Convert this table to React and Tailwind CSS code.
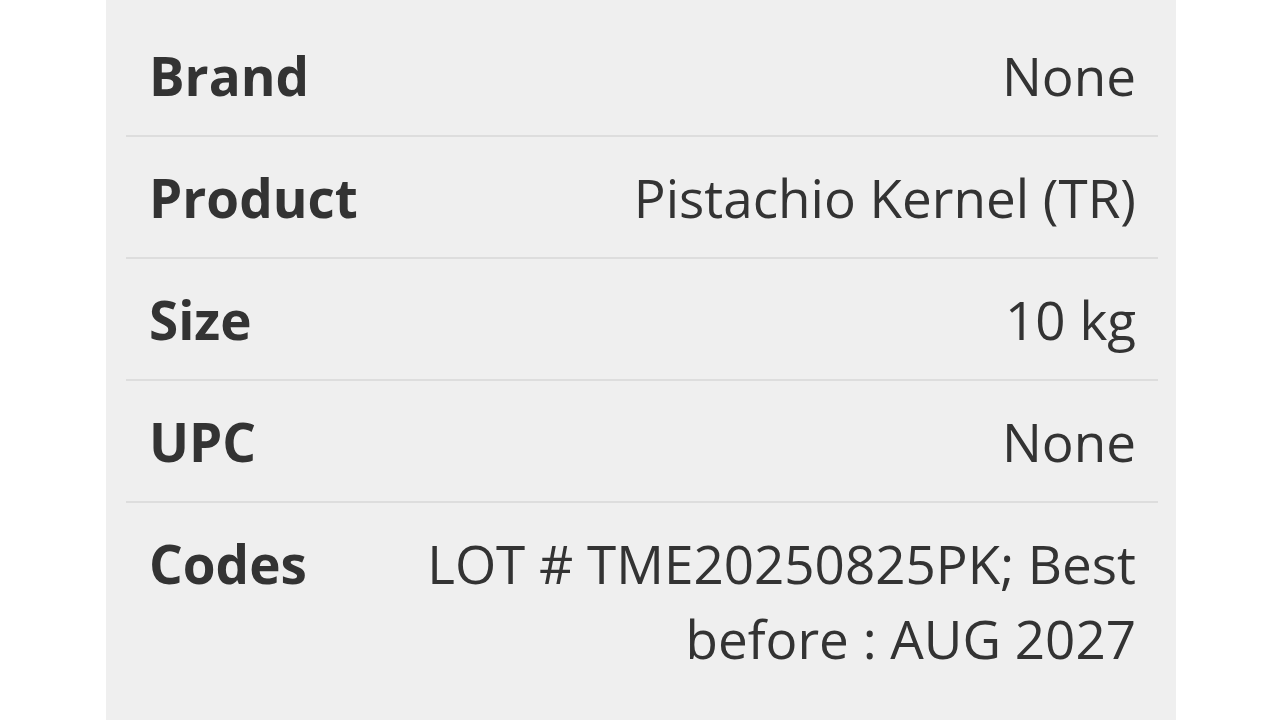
import React from "react";

const rows = [
  { label: "Brand", value: "None" },
  { label: "Product", value: "Pistachio Kernel (TR)" },
  { label: "Size", value: "10 kg" },
  { label: "UPC", value: "None" },
  { label: "Codes", value: "LOT # TME20250825PK; Best before : AUG 2027" },
];

const App = () => {
  return (
    <div className="min-h-screen bg-white" style={{ fontFamily: '"Open Sans", "Noto Sans", sans-serif' }}>
      <div className="mx-[106px] w-[1070px] h-[720px] bg-[#efefef] pl-5 pr-[18px] pt-[15px] overflow-hidden">
        {rows.map((row, i) => (
          <div
            key={row.label}
            className={`flex items-start justify-between pl-[23px] pr-[22px] pt-[23px] pb-[22px] text-[53px] leading-[75px] text-[#333333] ${
              i < rows.length - 1 ? "border-b-2 border-[#dddddd]" : ""
            }`}
          >
            <div className="w-[240px] shrink-0 font-bold">{row.label}</div>
            <div className="flex-1 text-right">{row.value}</div>
          </div>
        ))}
      </div>
    </div>
  );
};

export default App;
